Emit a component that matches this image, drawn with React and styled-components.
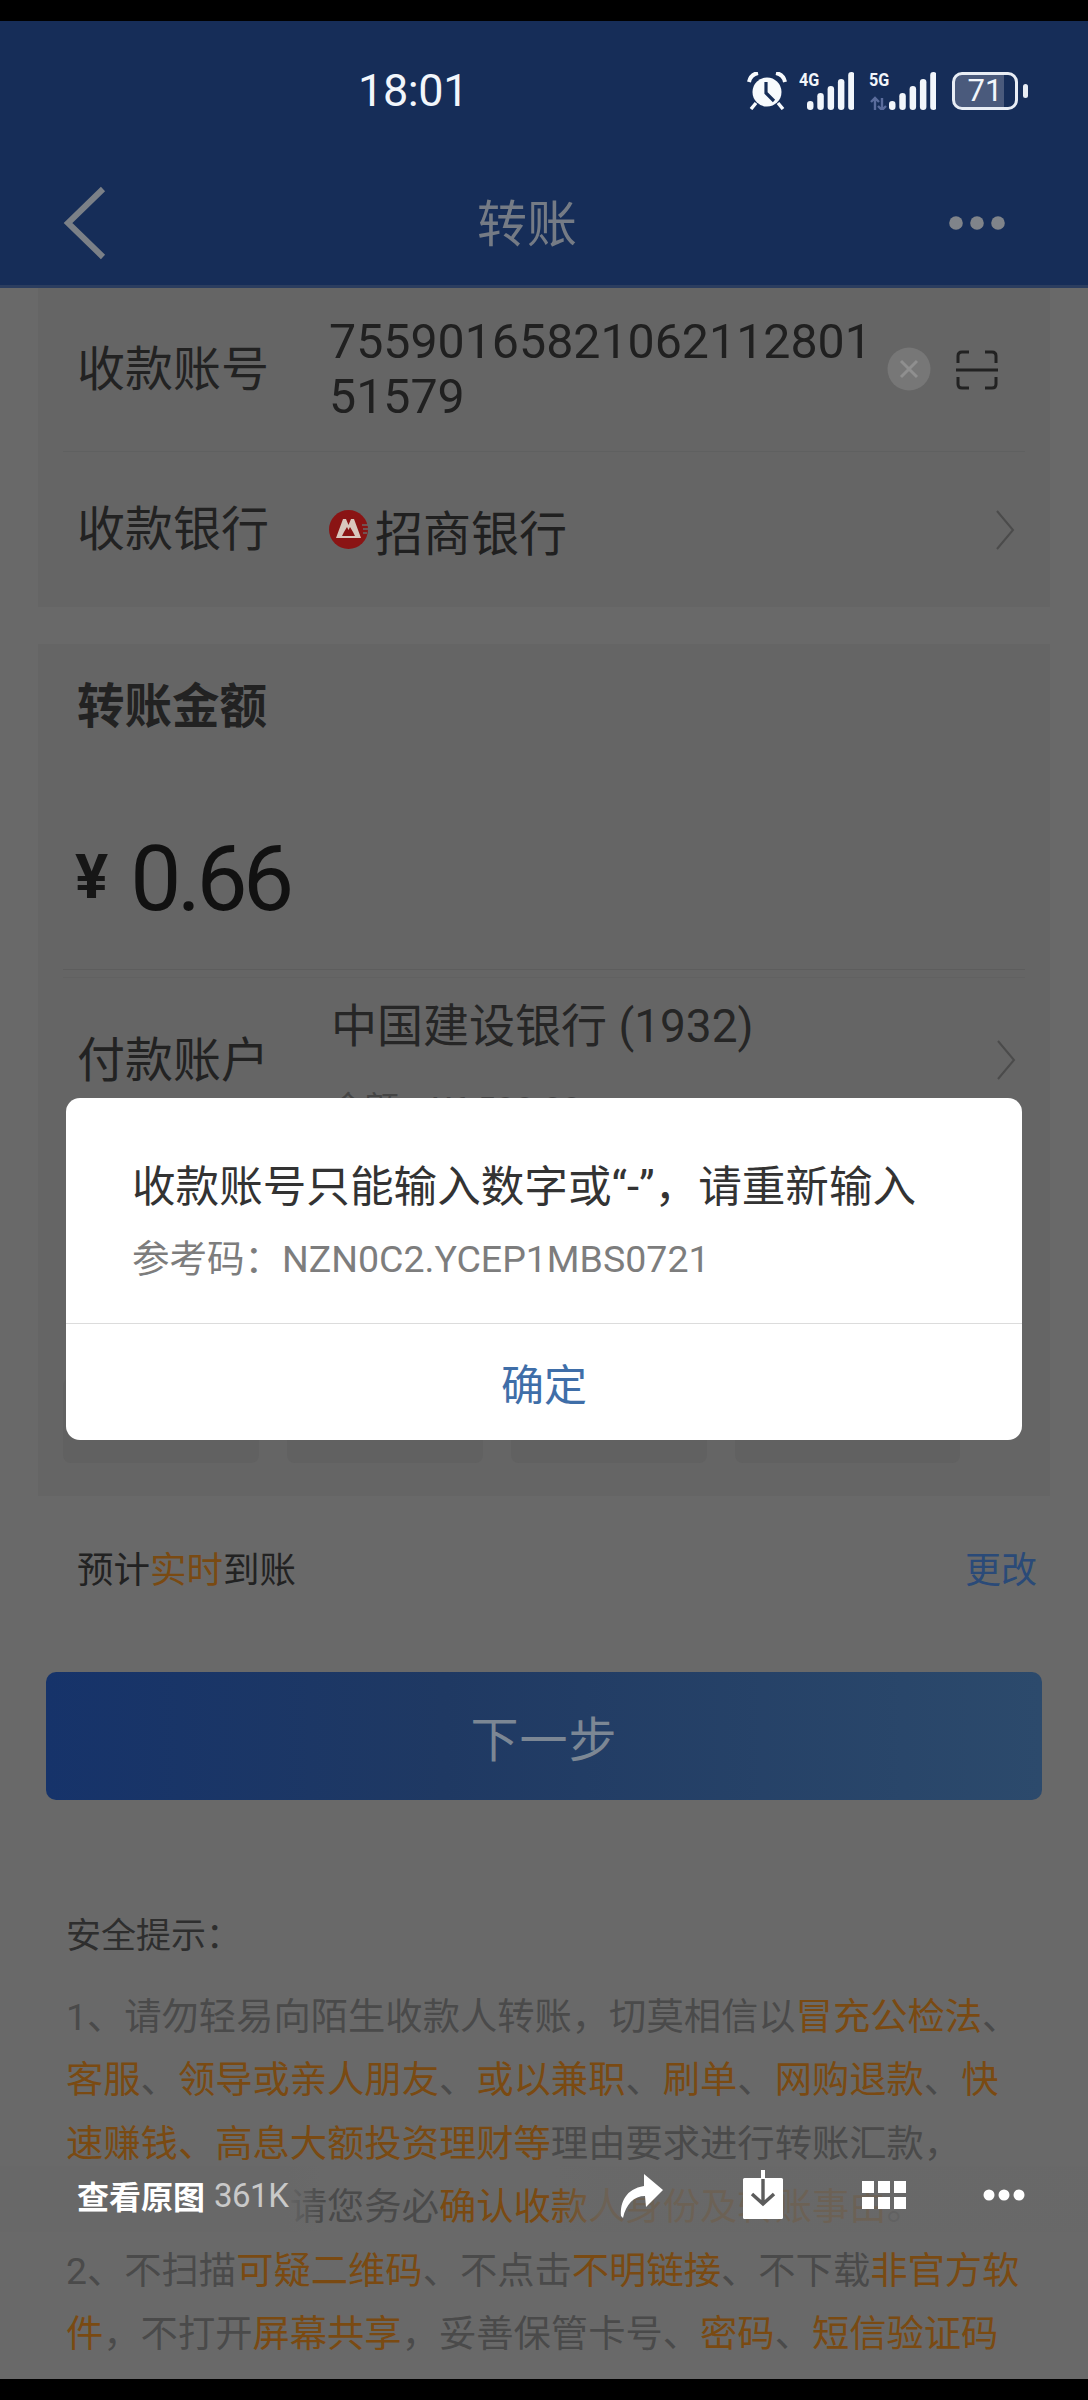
import React from "react";
import styled, { createGlobalStyle } from "styled-components";

const Global = createGlobalStyle`
  html, body { margin: 0; padding: 0; background: #000; }
  * { box-sizing: border-box; }
`;
const cjk = `Roboto, "Noto Sans CJK SC", sans-serif`;

const Screen = styled.div`
  position: relative; width: 1088px; height: 2400px; overflow: hidden;
  display: flex; flex-direction: column; background: #000; font-family: ${cjk}; color: #1f1f1f;
`;
const TopBar = styled.div`height: 21px; flex: none; background: #000;`;
const BottomBar = styled.div`height: 21px; flex: none; background: #000;`;
const Page = styled.main`flex: 1; min-height: 0; overflow: hidden; background: #696969; display: flex; flex-direction: column;`;

const Header = styled.header`flex: none; height: 267px; background: #162d58; border-bottom: 3px solid #2b3d5f; display: flex; flex-direction: column;`;
const StatusBar = styled.div`height: 139px; display: flex; align-items: center; padding: 0 60px 0 358px; justify-content: space-between;`;
const Time = styled.div`font-size: 45px; letter-spacing: -0.4px; line-height: 1; color: #f2f6fb; margin-top: -1px;`;
const StatusIcons = styled.div`display: flex; align-items: center; height: 40px;`;
const Signal = styled.div`position: relative; display: flex; align-items: flex-end; height: 38px; margin-left: ${p => p.$ml}px;`;
const NetLabel = styled.span`position: absolute; left: ${p => p.$l}px; top: -2px; font-size: 19px; font-weight: 700; line-height: 1; color: #f2f6fb; transform: scaleX(.85); transform-origin: left;`;
const Battery = styled.div`
  width: 66px; height: 38px; margin-left: 16px; border: 3px solid #e8edf5; border-radius: 10px;
  background: linear-gradient(90deg, #4a5a7c 82%, transparent 82%);
  display: flex; align-items: center; justify-content: center; font-size: 31px; color: #f2f6fb; line-height: 1;
`;
const BatteryNub = styled.div`width: 5px; height: 14px; margin-left: 5px; background: #e8edf5; border-radius: 3px;`;
const NavBar = styled.div`flex: 1; display: flex; align-items: center; justify-content: space-between; padding: 0 80px 0 62px;`;
const NavTitle = styled.div`font-size: 50px; line-height: 1; color: #757b85; margin-top: 4px;`;

const Card = styled.section`flex: none; margin: 0 38px; background: #656565;`;
const AccountCard = styled(Card)`height: 319px; padding: 0 25px;`;
const AmountCard = styled(Card)`margin-top: 37px; height: 852px; padding: 0 25px;`;
const Row = styled.div`display: flex; align-items: center; height: ${p => p.$h}px; border-bottom: ${p => p.$line ? "1px solid #5f6060" : "0"};`;
const Label = styled.div`flex: none; width: 266px; padding-left: 14px; font-size: 48px; line-height: 1; color: #222;`;
const AccountNumber = styled.div`width: 558px; font-size: 48.3px; line-height: 55px; color: #202020; word-break: break-all; margin-top: -2px;`;
const Bank = styled.div`flex: 1; display: flex; align-items: center; font-size: 48px; color: #202020; gap: 7px;`;
const Title = styled.div`height: 116px; padding: 0 14px; display: flex; align-items: center; font-size: 47.5px; font-weight: 700; color: #222;`;
const Amount = styled.div`height: 210px; border-bottom: 1px solid #5d5d5d; padding: 0 0 0 12px; display: flex; align-items: center;`;
const Yen = styled.span`font-size: 62px; font-weight: 700; color: #161616; margin-right: 22px; line-height: 1; margin-top: 24px;`;
const AmountValue = styled.span`font-size: 91px; letter-spacing: -4.5px; color: #111; line-height: 1; margin-top: 30px;`;
const SecondRule = styled.div`height: 1px; margin: 7px 0 0; background: #616161;`;
const PayRow = styled.div`display: flex; align-items: flex-start; height: 170px; padding-right: 9px;`;
const PayLabel = styled(Label)`margin-top: 59px;`;
const PayInfo = styled.div`flex: 1; padding-left: 2px; margin-top: 23px;`;
const PayBank = styled.div`font-size: 46px; line-height: 50px; color: #262626; `;
const Balance = styled.div`margin-top: 38px; font-size: 34px; line-height: 40px; color: #454545;`;
const ChevronWrap = styled.div`margin-top: 62px;`;
const Tiles = styled.div`display: flex; gap: 28px; margin-top: 230px; padding-right: 65px;`;
const Tile = styled.div`flex: ${p => p.$wide ? 1.15 : 1}; height: 85px; background: #616161; border-radius: 8px;`;

const Arrival = styled.div`flex: none; height: 124px; padding: 0 51px 0 77px; margin-top: 9px; display: flex; align-items: center; justify-content: space-between; font-size: 36.5px; color: #222;`;
const Hot = styled.span`color: ${p => p.$dim ? "#6e4a1a" : "#7a4a12"};`;
const Change = styled.span`color: #2a4a78; font-size: 36px;`;
const NextButton = styled.div`
  flex: none; height: 128px; margin: 43px 46px 0; border-radius: 10px;
  background: linear-gradient(90deg, #16336a, #1f3963 40%, #2c4a6c);
  display: flex; align-items: center; justify-content: center; font-size: 48px; color: #7c8794; letter-spacing: 1px;
`;
const Tips = styled.section`flex: none; padding: 0 0 0 66px; margin-top: 116px;`;
const TipsTitle = styled.div`font-size: 35px; line-height: 42px; color: #2e2e2e; margin-bottom: 28px;`;
const TipLine = styled.div`font-size: 37.3px; line-height: 63.4px; height: 63.4px; white-space: nowrap; color: #4a4a4a;`;

const Dialog = styled.div`position: absolute; left: 66px; top: 1098px; width: 956px; height: 342px; background: #fff; border-radius: 14px; display: flex; flex-direction: column;`;
const DialogBody = styled.div`height: 226px; padding: 62px 66px 0; border-bottom: 1px solid #dcdcdc;`;
const DialogMessage = styled.div`font-size: 43.6px; line-height: 56px; color: #333; white-space: nowrap;`;
const DialogRef = styled.div`margin-top: 20px; font-size: 37.5px; line-height: 46px; color: #7d7d7d; white-space: nowrap;`;
const DialogAction = styled.div`flex: 1; display: flex; align-items: center; justify-content: center; font-size: 43px; color: #3f6ea8;`;

const Viewer = styled.div`
  position: absolute; left: 0; top: 2166px; width: 1088px; height: 66px; padding: 0 0 8px 77px;
  display: flex; align-items: center;
  background: linear-gradient(90deg, #686868 285px, transparent 322px, transparent 555px, rgba(104,104,104,.78) 600px);
`;
const ViewOriginal = styled.span`font-size: 32px; font-weight: 700; color: #fff;`;
const Size = styled.span`font-size: 33px; color: #c9c9c9; margin-left: 9px; margin-right: 330px; letter-spacing: -.5px;`;
const ViewerIcons = styled.div`position: absolute; left: 620px; top: 0; display: flex; align-items: flex-start;`;

const Chevron = ({ h = 40 }) => (
  <svg width="20" height={h} viewBox="0 0 20 40"><path d="M2 1 L18 20 L2 39" fill="none" stroke="#4b4b4b" strokeWidth="2" /></svg>
);

const Bars = ({ w }) => (
  <svg width={w} height="38" viewBox={`0 0 ${w} 38`}>
    {[8, 16, 24, 31, 38].map((h, i) => (
      <rect key={i} x={i * 10.3} y={38 - (i < 2 ? h + 1 : h)} width="6.5" height={i < 2 ? h + 1 : h} rx="3.2" fill="#f2f6fb" />
    ))}
  </svg>
);

export default function App() {
  return (
    <Screen>
      <Global />
      <TopBar />
      <Page>
        <Header>
          <StatusBar>
            <Time>18:01</Time>
            <StatusIcons>
              <svg width="40" height="38" viewBox="0 0 40 38">
                <circle cx="20" cy="20" r="14.5" fill="#f7fafd" />
                <path d="M19 10 L19 21 L27 29" fill="none" stroke="#162d58" strokeWidth="3.2" />
                <path d="M2 10 C3 5 6 2 11 1 M38 10 C37 5 34 2 29 1" fill="none" stroke="#f7fafd" strokeWidth="4" />
                <path d="M9 31 L4 37 M31 31 L36 37" stroke="#f7fafd" strokeWidth="3.4" />
              </svg>
              <Signal $ml={12}>
                <NetLabel $l={0}>4G</NetLabel>
                <div style={{ width: 8 }} />
                <Bars w={47} />
              </Signal>
              <Signal $ml={15}>
                <NetLabel $l={0}>5G</NetLabel>
                <svg width="20" height="38" viewBox="0 0 20 38">
                  <path d="M6 38 V26 M2 30 L6 26 L10 30 M13 26 V38 M9 34 L13 38 L17 34" fill="none" stroke="#5a6c9c" strokeWidth="2.4" />
                </svg>
                <Bars w={47} />
              </Signal>
              <Battery>71</Battery>
              <BatteryNub />
            </StatusIcons>
          </StatusBar>
          <NavBar>
            <svg width="44" height="74" viewBox="0 0 44 74">
              <path d="M41 3 L6 37 L41 71" fill="none" stroke="#7b8087" strokeWidth="6" />
            </svg>
            <NavTitle>转账</NavTitle>
            <svg width="60" height="16" viewBox="0 0 60 16">
              <circle cx="8" cy="8" r="6.8" fill="#80848a" /><circle cx="29" cy="8" r="6.8" fill="#80848a" /><circle cx="50" cy="8" r="6.8" fill="#80848a" />
            </svg>
          </NavBar>
        </Header>
        <AccountCard>
          <Row $h={164} $line>
            <Label>收款账号</Label>
            <AccountNumber>7559016582106211280151579</AccountNumber>
            <svg width="44" height="44" viewBox="0 0 44 44" style={{ marginLeft: 0, marginTop: -2 }}>
              <circle cx="22" cy="22" r="21.5" fill="#777" />
              <path d="M14 14 L30 30 M30 14 L14 30" stroke="#8f8f8f" strokeWidth="3" />
            </svg>
            <svg width="42" height="40" viewBox="0 0 42 40" style={{ marginLeft: 25, marginTop: 1 }}>
              <path d="M2 13 V6 Q2 2 6 2 H13 M29 2 H36 Q40 2 40 6 V13 M2 27 V34 Q2 38 6 38 H13 M29 38 H36 Q40 38 40 34 V27 M0 20 H42" fill="none" stroke="#222" strokeWidth="3" />
            </svg>
          </Row>
          <Row $h={155}>
            <Label>收款银行</Label>
            <Bank>
              <svg width="39" height="39" viewBox="0 0 39 39">
                <circle cx="19.5" cy="19.5" r="19.5" fill="#8a1414" />
                <path d="M7 28 L14 9 H17 L19.5 15 L22 9 H25 L32 28 Z M15 22 L13 26 H26 L24 22 L21 17 L19.5 20 L18 17 Z" fill="#d9c7bd" fillRule="evenodd" />
                <path d="M33 15 H39 M34 19 H39 M34 23 H38" stroke="#6a6a6a" strokeWidth="1.4" />
              </svg>
              招商银行
            </Bank>
            <Chevron />
            <div style={{ width: 10 }} />
          </Row>
        </AccountCard>
        <AmountCard>
          <Title>转账金额</Title>
          <Amount>
            <Yen>¥</Yen>
            <AmountValue>0.66</AmountValue>
          </Amount>
          <SecondRule />
          <PayRow>
            <PayLabel>付款账户</PayLabel>
            <PayInfo>
              <PayBank>中国建设银行 (1932)</PayBank>
              <Balance>余额：¥6,588.88</Balance>
            </PayInfo>
            <ChevronWrap><Chevron /></ChevronWrap>
          </PayRow>
          <Tiles>
            <Tile /><Tile /><Tile /><Tile $wide />
          </Tiles>
        </AmountCard>
        <Arrival>
          <span>预计<Hot>实时</Hot>到账</span>
          <Change>更改</Change>
        </Arrival>
        <NextButton>下一步</NextButton>
        <Tips>
          <TipsTitle>安全提示：</TipsTitle>
          <TipLine>1、请勿轻易向陌生收款人转账，切莫相信以<Hot>冒充公检法</Hot>、</TipLine>
          <TipLine><Hot>客服</Hot>、<Hot>领导或亲人朋友</Hot>、<Hot>或以兼职</Hot>、<Hot>刷单</Hot>、<Hot>网购退款</Hot>、<Hot>快</Hot></TipLine>
          <TipLine><Hot>速赚钱、高息大额投资理财等</Hot>理由要求进行转账汇款，</TipLine>
          <TipLine>谨防诈骗，并请您务必<Hot>确认收款人身份及转账事由</Hot>。</TipLine>
          <TipLine>2、不扫描<Hot>可疑二维码</Hot>、不点击<Hot>不明链接</Hot>、不下载<Hot>非官方软</Hot></TipLine>
          <TipLine><Hot>件</Hot>，不打开<Hot>屏幕共享</Hot>，妥善保管卡号、<Hot>密码</Hot>、<Hot>短信验证码</Hot></TipLine>
        </Tips>
      </Page>
      <BottomBar />
      <Dialog>
        <DialogBody>
          <DialogMessage>收款账号只能输入数字或“-”，请重新输入</DialogMessage>
          <DialogRef>参考码：NZN0C2.YCEP1MBS0721</DialogRef>
        </DialogBody>
        <DialogAction>确定</DialogAction>
      </Dialog>
      <Viewer>
        <ViewOriginal>查看原图</ViewOriginal>
        <Size>361K</Size>
        <ViewerIcons>
          <svg width="44" height="50" viewBox="0 0 44 50" style={{ marginTop: 6 }}>
            <path d="M1 44 C0 30 6 17 24 14 L24 2 L43 18 L26 35 L25 24 C14 24 6 32 3 46 Z" fill="#fff" />
          </svg>
          <svg width="42" height="52" viewBox="0 0 42 52" style={{ marginLeft: 78, marginTop: 4 }}>
            <rect x="1" y="8" width="40" height="41" rx="1.5" fill="#fff" />
            <rect x="19" y="0" width="4" height="9" fill="#fff" />
            <path d="M21 9 V34 M10 24 L21 34 L32 24" fill="none" stroke="#5c5c5c" strokeWidth="3.4" />
          </svg>
          <svg width="44" height="28" viewBox="0 0 44 28" style={{ marginLeft: 78, marginTop: 15 }}>
            {[0, 16, 32].flatMap(x => [0, 16].map(y => <rect key={x + "-" + y} x={x} y={y} width="12" height="12" fill="#fff" />))}
          </svg>
          <svg width="42" height="12" viewBox="0 0 42 12" style={{ marginLeft: 77, marginTop: 23 }}>
            <circle cx="6" cy="6" r="5.5" fill="#fff" /><circle cx="21" cy="6" r="5.5" fill="#fff" /><circle cx="36" cy="6" r="5.5" fill="#fff" />
          </svg>
        </ViewerIcons>
      </Viewer>
    </Screen>
  );
}
